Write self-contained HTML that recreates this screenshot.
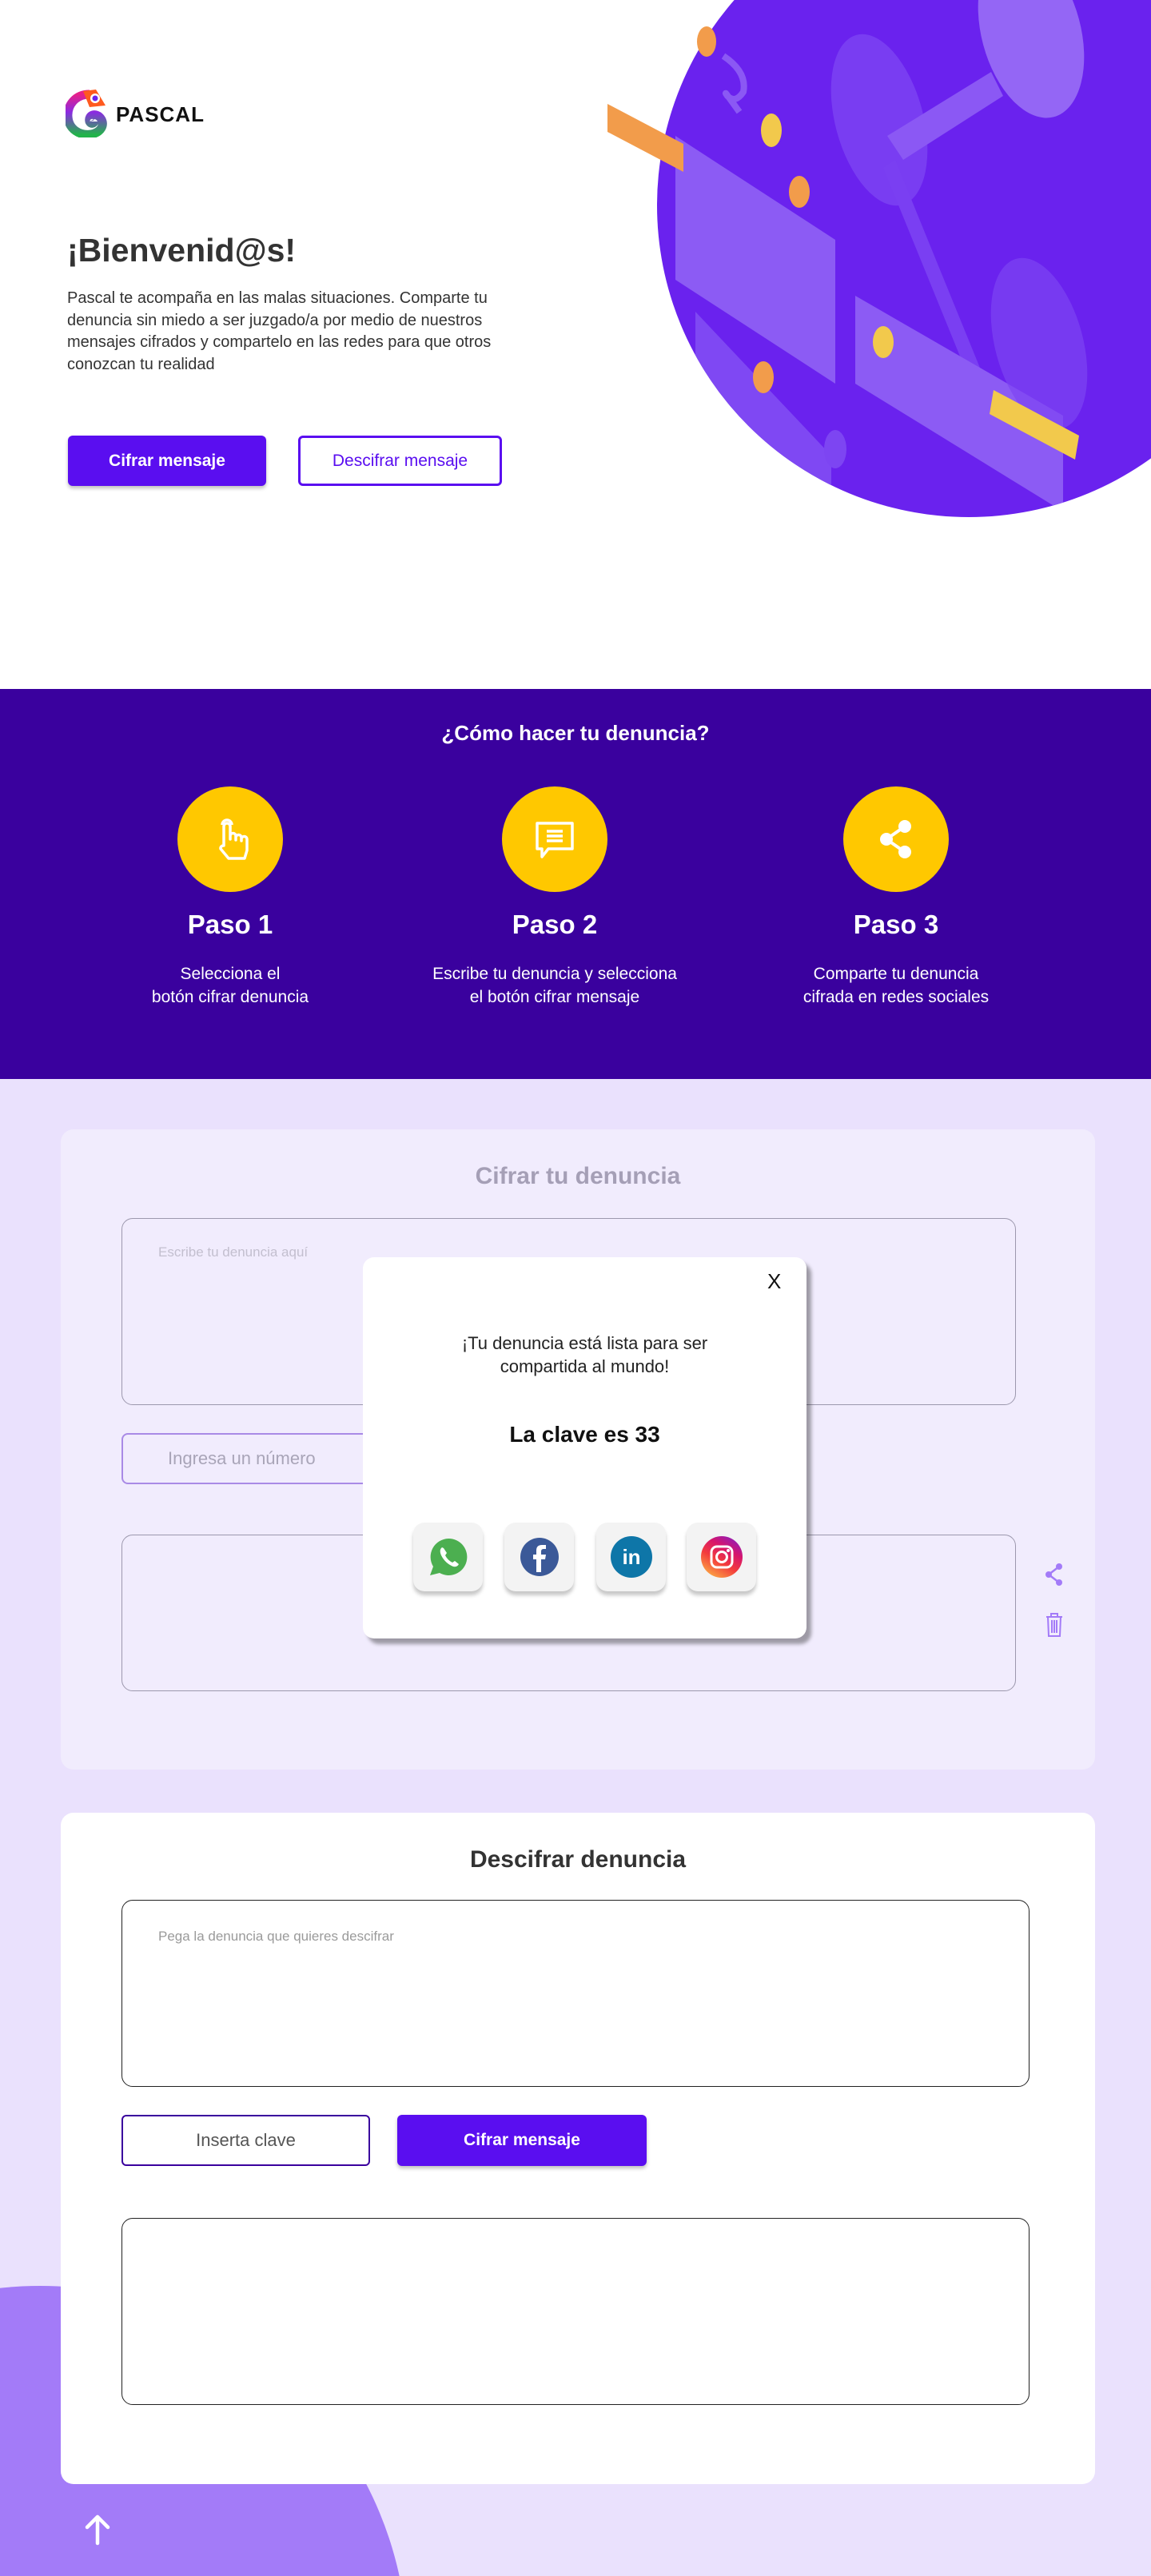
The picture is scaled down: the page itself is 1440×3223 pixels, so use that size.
<!DOCTYPE html>
<html><head><meta charset="utf-8">
<style>
*{margin:0;padding:0;box-sizing:border-box}
html,body{width:1440px;height:3223px;overflow:hidden}
body{position:relative;background:#fff;font-family:"Liberation Sans",Arial,sans-serif}
.abs{position:absolute}
.btn{position:absolute;border-radius:6px;display:flex;align-items:center;justify-content:center;font-size:21px}
.step{position:absolute;width:400px;text-align:center;color:#fff}
.step .c{width:132px;height:132px;border-radius:50%;background:#ffc800;margin:0 auto;display:flex;align-items:center;justify-content:center}
.step h3{font-size:33px;font-weight:bold;margin-top:22px}
.step p{font-size:21px;line-height:29px;margin-top:28px}
.soc{position:absolute;top:1905px;width:87px;height:86px;border-radius:14px;background:#f3f3f3;box-shadow:0 5px 5px rgba(0,0,0,.22);display:flex;align-items:center;justify-content:center}
</style></head><body>

<!-- hero circle -->
<svg class="abs" style="left:760px;top:0" width="680" height="660" viewBox="760 0 680 660">
<defs><clipPath id="cc"><circle cx="1212" cy="257" r="390"/></clipPath></defs>
<circle cx="1212" cy="257" r="390" fill="#6a22ee"/>
<g clip-path="url(#cc)">
<ellipse cx="1290" cy="40" rx="62" ry="110" fill="#9f78f6" opacity=".8" transform="rotate(-15 1290 40)"/>
<ellipse cx="1100" cy="150" rx="55" ry="110" fill="#7d45f2" opacity=".8" transform="rotate(-15 1100 150)"/>
<polygon points="1110,170 1240,90 1255,120 1130,200" fill="#8b58f4"/>
<polygon points="1120,200 1230,470 1215,480 1105,210" fill="#7a3ff2"/>
<polygon points="845,170 1045,300 1045,480 845,350" fill="#8c5bf4"/>
<polygon points="870,390 1040,570 1040,700 870,650" fill="#7f48f3"/>
<polygon points="1070,370 1330,520 1330,640 1070,480" fill="#8c5bf4"/>
<ellipse cx="1300" cy="430" rx="55" ry="110" fill="#7d45f2" opacity=".7" transform="rotate(-15 1300 430)"/>
<polygon points="1243,488 1350,545 1345,575 1238,518" fill="#f2c94c"/>
<ellipse cx="1000" cy="240" rx="13" ry="20" fill="#f29c4b"/>
<ellipse cx="1105" cy="428" rx="13" ry="20" fill="#f2c94c"/>
<ellipse cx="955" cy="472" rx="13" ry="20" fill="#f29c4b"/>
<ellipse cx="1045" cy="562" rx="14" ry="24" fill="#7d45f2"/>
</g>
<polygon points="760,130 855,180 855,215 760,165" fill="#f29c4b"/>
<ellipse cx="884" cy="52" rx="12" ry="19" fill="#f29c4b"/>
<ellipse cx="965" cy="163" rx="13" ry="21" fill="#f2c94c"/>
<path d="M905,70 q30,20 25,45 q-10,15 -20,5 q-8,-12 15,20" stroke="#8b58f4" stroke-width="8" fill="none"/>
</svg>

<!-- logo -->
<svg class="abs" style="left:82px;top:110px" width="60" height="62" viewBox="0 0 60 62">
<defs><linearGradient id="lg" x1="0" y1="0" x2="0" y2="1"><stop offset="0" stop-color="#e6208a"/><stop offset=".45" stop-color="#8a2be2"/><stop offset="1" stop-color="#22b34a"/></linearGradient></defs>
<path d="M30,8 C12,8 2,22 3,36 C4,52 18,60 32,58 C44,56 50,46 44,38 C38,30 28,34 30,42 C32,46 36,44 36,42" stroke="url(#lg)" stroke-width="11" fill="none"/>
<path d="M22,4 L38,2 L50,22 L30,24 Z" fill="#ff5a1f"/>
<circle cx="37" cy="13" r="6" fill="#fff"/><circle cx="37" cy="13" r="3.5" fill="#6a22ee"/>
</svg>
<div class="abs" style="left:145px;top:128px;font-size:26px;font-weight:bold;color:#111;letter-spacing:1px">PASCAL</div>

<div class="abs" style="left:84px;top:290px;font-size:41px;font-weight:bold;color:#333">¡Bienvenid@s!</div>
<div class="abs" style="left:84px;top:360px;width:700px;font-size:20px;line-height:27.5px;color:#333">Pascal te acompaña en las malas situaciones. Comparte tu<br>denuncia sin miedo a ser juzgado/a por medio de nuestros<br>mensajes cifrados y compartelo en las redes para que otros<br>conozcan tu realidad</div>
<div class="btn" style="left:85px;top:545px;width:248px;height:63px;background:#5a0ef0;color:#fff;font-weight:bold;box-shadow:0 3px 5px rgba(0,0,0,.25)">Cifrar mensaje</div>
<div class="btn" style="left:373px;top:545px;width:255px;height:63px;border:3px solid #5a0ef0;color:#5a0ef0">Descifrar mensaje</div>

<!-- steps -->
<div class="abs" style="left:0;top:862px;width:1440px;height:488px;background:#3a019e"></div>
<div class="abs" style="left:0;top:902px;width:1440px;text-align:center;color:#fff;font-size:26px;font-weight:bold">¿Cómo hacer tu denuncia?</div>
<div class="step" style="left:88px;top:984px">
<div class="c"><svg width="64" height="64" viewBox="0 0 64 64" fill="none" stroke="#fff" stroke-width="3.5" stroke-linejoin="round"><path d="M22,14 a6,6 0 0 1 12,0"/><path d="M24,40 V16 a4,4 0 0 1 8,0 V32 V28 a3.5,3.5 0 0 1 7,0 V33 V30 a3.5,3.5 0 0 1 7,0 V34 V32 a3.5,3.5 0 0 1 7,0 V46 l-3,10 H30 L20,44 a3.5,3.5 0 0 1 4,-4z"/></svg></div>
<h3>Paso 1</h3><p>Selecciona el<br>botón cifrar denuncia</p></div>
<div class="step" style="left:494px;top:984px">
<div class="c"><svg width="64" height="64" viewBox="0 0 64 64" fill="none" stroke="#fff" stroke-width="3.5" stroke-linejoin="round"><path d="M10,12 H54 V44 H24 L16,54 V44 H10 Z"/><path d="M22,22 H42 M22,28 H42 M22,34 H42"/></svg></div>
<h3>Paso 2</h3><p>Escribe tu denuncia y selecciona<br>el botón cifrar mensaje</p></div>
<div class="step" style="left:921px;top:984px">
<div class="c"><svg width="64" height="64" viewBox="0 0 64 64" fill="#fff"><circle cx="43" cy="16" r="8"/><circle cx="20" cy="32" r="8"/><circle cx="43" cy="48" r="8"/><path d="M43,16 L20,32 L43,48" stroke="#fff" stroke-width="4" fill="none"/></svg></div>
<h3>Paso 3</h3><p>Comparte tu denuncia<br>cifrada en redes sociales</p></div>

<!-- lavender -->
<div class="abs" style="left:0;top:1350px;width:1440px;height:1873px;background:#eae1fd"></div>
<div class="abs" style="left:-410px;top:2860px;width:920px;height:920px;border-radius:50%;background:#a37bf8"></div>

<!-- card 1 -->
<div class="abs" style="left:76px;top:1413px;width:1294px;height:801px;background:#f1ecfd;border-radius:16px"></div>
<div class="abs" style="left:76px;top:1455px;width:1294px;text-align:center;font-size:30px;font-weight:bold;color:#a59fb6">Cifrar tu denuncia</div>
<div class="abs" style="left:152px;top:1524px;width:1119px;height:234px;border:1.5px solid #9c98ad;border-radius:14px"></div>
<div class="abs" style="left:198px;top:1557px;font-size:17px;color:#c3bfcf">Escribe tu denuncia aquí</div>
<div class="abs" style="left:152px;top:1793px;width:320px;height:64px;border:2px solid #a98ae6;border-radius:8px"></div>
<div class="abs" style="left:210px;top:1812px;font-size:22px;color:#a9a5b8">Ingresa un número</div>
<div class="abs" style="left:152px;top:1920px;width:1119px;height:196px;border:1.5px solid #9c98ad;border-radius:14px"></div>
<svg class="abs" style="left:1305px;top:1955px" width="28" height="30" viewBox="0 0 28 30" fill="#a37bf8"><circle cx="20" cy="5" r="4"/><circle cx="7" cy="15" r="4"/><circle cx="20" cy="25" r="4"/><path d="M20,5 L7,15 L20,25" stroke="#a37bf8" stroke-width="2.5" fill="none"/></svg>
<svg class="abs" style="left:1306px;top:2016px" width="26" height="34" viewBox="0 0 26 34" fill="none" stroke="#a37bf8" stroke-width="2"><path d="M3,7 H23 M9,7 V3 H17 V7 M5,7 L6,31 H20 L21,7 M10,11 V27 M13,11 V27 M16,11 V27"/></svg>

<!-- modal -->
<div class="abs" style="left:454px;top:1573px;width:555px;height:477px;background:#fff;border-radius:14px;box-shadow:6px 7px 5px rgba(0,0,0,.35)"></div>
<div class="abs" style="left:960px;top:1588px;font-size:26px;color:#111">X</div>
<div class="abs" style="left:454px;top:1666px;width:555px;text-align:center;font-size:22px;line-height:29px;color:#222">¡Tu denuncia está lista para ser<br>compartida al mundo!</div>
<div class="abs" style="left:454px;top:1779px;width:555px;text-align:center;font-size:28px;font-weight:bold;color:#111">La clave es 33</div>
<div class="soc" style="left:517px"><svg width="50" height="50" viewBox="0 0 50 50"><path d="M25,2 a23,23 0 1 1 -11,43 L2,48 L6,37 A23,23 0 0 1 25,2z" fill="#4caf50"/><path d="M17,13 q-4,3 -1,10 q5,10 15,14 q5,1 7,-3 l-5,-4 l-3,2 q-6,-3 -9,-9 l2,-3 l-4,-6z" fill="#fff"/></svg></div>
<div class="soc" style="left:631px"><svg width="50" height="50" viewBox="0 0 50 50"><circle cx="25" cy="25" r="24" fill="#3b5998"/><path d="M27,44 V28 H32 L33,22 H27 V18 q0,-3 3,-3 H33 V10 H28 q-7,0 -7,7 V22 H17 V28 H21 V44z" fill="#fff"/></svg></div>
<div class="soc" style="left:746px"><svg width="52" height="52" viewBox="0 0 52 52"><circle cx="26" cy="26" r="26" fill="#0e76a8"/><text x="26" y="35" text-anchor="middle" font-family="Liberation Sans" font-weight="bold" font-size="26" fill="#fff">in</text></svg></div>
<div class="soc" style="left:859px"><svg width="52" height="52" viewBox="0 0 52 52"><defs><linearGradient id="ig" x1="0.2" y1="1" x2="0.8" y2="0"><stop offset="0" stop-color="#fcaf45"/><stop offset=".4" stop-color="#f33c3c"/><stop offset=".7" stop-color="#d6156d"/><stop offset="1" stop-color="#8a1fc0"/></linearGradient></defs><circle cx="26" cy="26" r="26" fill="url(#ig)"/><rect x="13" y="13" width="26" height="26" rx="7" fill="none" stroke="#fff" stroke-width="3"/><circle cx="26" cy="26" r="6.5" fill="none" stroke="#fff" stroke-width="3"/><circle cx="34" cy="18" r="2" fill="#fff"/></svg></div>

<!-- card 2 -->
<div class="abs" style="left:76px;top:2268px;width:1294px;height:840px;background:#fff;border-radius:16px"></div>
<div class="abs" style="left:76px;top:2310px;width:1294px;text-align:center;font-size:30px;font-weight:bold;color:#333">Descifrar denuncia</div>
<div class="abs" style="left:152px;top:2377px;width:1136px;height:234px;border:1.5px solid #222;border-radius:14px"></div>
<div class="abs" style="left:198px;top:2413px;font-size:17px;color:#9a9a9a">Pega la denuncia que quieres descifrar</div>
<div class="btn" style="left:152px;top:2646px;width:311px;height:64px;border:2px solid #3a019e;color:#555;font-size:22px;background:#fff">Inserta clave</div>
<div class="btn" style="left:497px;top:2646px;width:312px;height:64px;background:#5a0ef0;color:#fff;font-weight:bold;box-shadow:0 3px 5px rgba(0,0,0,.25)">Cifrar mensaje</div>
<div class="abs" style="left:152px;top:2775px;width:1136px;height:234px;border:1.5px solid #222;border-radius:14px"></div>

<svg class="abs" style="left:104px;top:3145px" width="36" height="40" viewBox="0 0 36 40" fill="none" stroke="#fff" stroke-width="4.5" stroke-linecap="round" stroke-linejoin="round"><path d="M18,37 V4 M5,17 L18,4 L31,17"/></svg>
</body></html>
